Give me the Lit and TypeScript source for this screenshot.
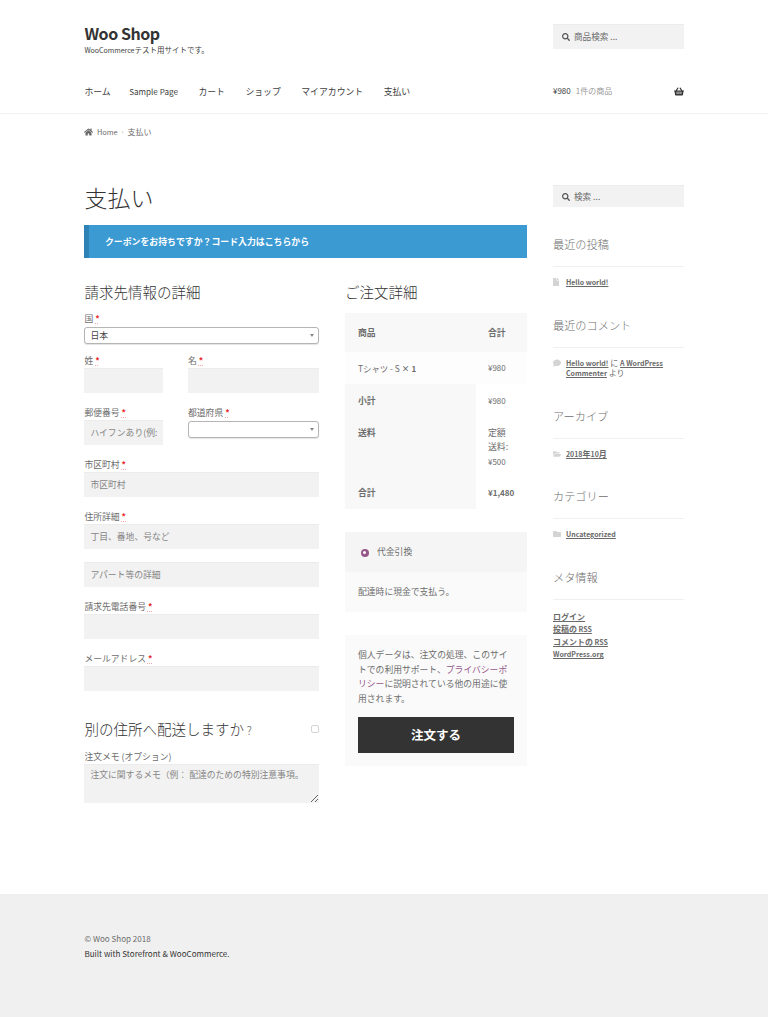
import { LitElement, html, css, svg } from "lit";
import { customElement } from "lit/decorators.js";

const P = {
  search: [512, "M505 442.7L405.3 343c-4.5-4.5-10.6-7-17-7H372c27.6-35.3 44-79.7 44-128C416 93.1 322.9 0 208 0S0 93.1 0 208s93.1 208 208 208c48.3 0 92.7-16.4 128-44v16.3c0 6.4 2.5 12.5 7 17l99.7 99.7c9.4 9.4 24.6 9.4 33.9 0l28.3-28.3c9.4-9.4 9.4-24.6.1-34zM208 336c-70.7 0-128-57.2-128-128 0-70.7 57.2-128 128-128 70.7 0 128 57.2 128 128 0 70.7-57.2 128-128 128z"],
  basket: [576, "M576 216v16c0 13.255-10.745 24-24 24h-8l-26.113 182.788C514.509 462.435 494.257 480 470.37 480H105.63c-23.887 0-44.139-17.565-47.518-41.212L32 256h-8c-13.255 0-24-10.745-24-24v-16c0-13.255 10.745-24 24-24h67.341l106.78-146.821c10.395-14.292 30.407-17.453 44.701-7.058 14.293 10.395 17.453 30.408 7.058 44.701L170.477 192h235.046L326.12 82.821c-10.395-14.292-7.234-34.306 7.059-44.701 14.291-10.395 34.306-7.235 44.701 7.058L484.659 192H552c13.255 0 24 10.745 24 24zM312 392V280c0-13.255-10.745-24-24-24s-24 10.745-24 24v112c0 13.255 10.745 24 24 24s24-10.745 24-24zm112 0V280c0-13.255-10.745-24-24-24s-24 10.745-24 24v112c0 13.255 10.745 24 24 24s24-10.745 24-24zm-224 0V280c0-13.255-10.745-24-24-24s-24 10.745-24 24v112c0 13.255 10.745 24 24 24s24-10.745 24-24z"],
  home: [576, "M280.37 148.26L96 300.11V464a16 16 0 0 0 16 16l112.06-.29a16 16 0 0 0 15.92-16V368a16 16 0 0 1 16-16h64a16 16 0 0 1 16 16v95.64a16 16 0 0 0 16 16.05L464 480a16 16 0 0 0 16-16V300L295.67 148.26a12.19 12.19 0 0 0-15.3 0zM571.6 251.47L488 182.56V44.05a12 12 0 0 0-12-12h-56a12 12 0 0 0-12 12v72.61L318.47 43a48 48 0 0 0-61 0L4.34 251.47a12 12 0 0 0-1.6 16.9l25.5 31A12 12 0 0 0 45.15 301l235.22-193.74a12.19 12.19 0 0 1 15.3 0L530.9 301a12 12 0 0 0 16.9-1.6l25.5-31a12 12 0 0 0-1.7-16.93z"],
  comment: [512, "M256 32C114.6 32 0 125.1 0 240c0 49.6 21.4 95 57 130.7C44.5 421.1 2.7 466 2.2 466.5c-2.2 2.3-2.8 5.7-1.5 8.7S4.8 480 8 480c66.3 0 116-31.8 140.6-51.4 32.7 12.3 69 19.4 107.4 19.4 141.4 0 256-93.1 256-208S397.4 32 256 32z"],
  file: [384, "M224 136V0H24C10.7 0 0 10.7 0 24v464c0 13.3 10.7 24 24 24h336c13.3 0 24-10.7 24-24V160H248c-13.2 0-24-10.8-24-24zm160-14.1v6.1H256V0h6.1c6.4 0 12.5 2.5 17 7l97.9 98c4.5 4.5 7 10.6 7 16.9z"],
  folder: [512, "M464 128H272l-64-64H48C21.49 64 0 85.49 0 112v288c0 26.51 21.49 48 48 48h416c26.51 0 48-21.49 48-48V176c0-26.51-21.49-48-48-48z"],
  open: [576, "M572.694 292.093L500.27 416.248A63.997 63.997 0 0 1 444.989 448H45.025c-18.523 0-30.064-20.093-20.731-36.093l72.424-124.155A64 64 0 0 1 152 256h399.964c18.523 0 30.064 20.093 20.73 36.093zM152 224h328v-48c0-26.51-21.49-48-48-48H272l-64-64H48C21.49 64 0 85.49 0 112v278.046l69.077-118.418C86.214 242.25 117.989 224 152 224z"],
} as const;

const icon = (n: keyof typeof P, cls: string) =>
  html`<svg class=${cls} viewBox="0 0 ${P[n][0]} 512" preserveAspectRatio="xMinYMid meet" aria-hidden="true">${svg`<path fill="currentColor" d=${P[n][1]}></path>`}</svg>`;

const req = html` <abbr class="req">*</abbr>`;

@customElement("app-root")
export class AppRoot extends LitElement {
  static styles = css`
    :host { display: block; min-height: 1017px; background: #fff; color: #6d6d6d;
      font-family: "Noto Sans CJK JP", "Noto Sans", sans-serif; font-size: 8.6px; line-height: 14.5px; }
    * { box-sizing: border-box; }
    h1, h2, h3, p, ul { margin: 0; padding: 0; font-weight: 400; }
    a { color: inherit; text-decoration: none; }
    .wrap { width: 599.6px; margin-left: 84.4px; }

    .top { display: flex; justify-content: space-between; height: 67px; padding-top: 24px; }
    .brand { margin-top: -1px; }
    .brand h1 { font-size: 16px; line-height: 20px; font-weight: 700; color: #333; letter-spacing: -0.45px; }
    .brand p { font-size: 7.5px; line-height: 11px; color: #404040; margin-top: 1px; }
    .brand p span { font-size: 7px; }
    .search { width: 131px; height: 25px; background: #f2f2f2; border-top: 1px solid #ececec; display: flex; align-items: center; padding: 0 0 1px 9px; gap: 4px; font-size: 8.6px; color: #6d6d6d; }
    .search svg { width: 8px; height: 8px; color: #555; }
    .search.side { height: 22px; padding-bottom: 0; }

    .navrow { display: flex; justify-content: space-between; align-items: center; height: 46px; padding-top: 5px; }
    nav { display: flex; gap: 20.5px; font-size: 8.85px; color: #404040; }
    nav .lat { font-size: 8.1px; margin-left: -2px; }
    .cart { width: 131px; display: flex; align-items: center; font-size: 8px; margin-top: -2px; }
    .cart b { font-weight: 400; color: #404040; margin-right: 5px; }
    .cart span { color: #9a9a9a; flex: 1; }
    .cart svg { width: 10px; height: 9px; color: #333; }
    .rule { height: 1px; background: #f0f0f0; }

    .crumb { display: flex; align-items: center; height: 37px; font-size: 7.4px; color: #6d6d6d; padding-bottom: 1px; }
    .crumb svg { width: 9px; height: 8px; margin-right: 3.5px; color: #666; }
    .crumb i { font-style: normal; color: #aaa; margin: 0 4px; font-size: 6px; }
    .crumb span { font-size: 8px; }

    .layout { display: flex; justify-content: space-between; padding-top: 34px; }
    main { width: 442.6px; }
    aside { width: 131px; }
    .title { font-size: 23px; line-height: 24px; color: #333; font-weight: 300; height: 40px; }
    .notice { height: 33px; background: #3c9ad3; border-left: 5px solid #2f82b5; color: #fff; font-weight: 700; font-size: 8.9px; line-height: 34px; padding-left: 15.6px; }

    .cols { display: flex; justify-content: space-between; padding-top: 23px; }
    .bill { width: 234.6px; }
    .order { width: 182px; }
    h3.sec { font-size: 14.5px; line-height: 22px; color: #333; font-weight: 300; }

    .f { display: block; }
    label.l { display: block; font-size: 8.8px; line-height: 13px; color: #6d6d6d; height: 14px; }
    .req { color: #e8252a; font-weight: 700; text-decoration: underline dotted #f3a9a9; text-underline-offset: 1px; }
    input.t, textarea { display: block; width: 100%; height: 25px; background: #f2f2f2; border: 0; border-top: 1px solid #ececec; border-radius: 0; padding: 0 6px 2px; font: inherit; font-size: 8.8px; color: #6d6d6d; outline: 0; margin: 0; }
    input.t::placeholder, textarea::placeholder { color: #858585; opacity: 1; }
    textarea { height: 39px; padding-top: 3px; padding-bottom: 0; line-height: 13px; resize: vertical; }
    .sel { position: relative; height: 17px; background: #fff; border: 1px solid #b5b5b5; border-radius: 3px; box-shadow: 0 1px 1px #e4e4e4; padding-left: 5px; font-size: 8.8px; line-height: 15px; color: #444; }
    .sel::after { content: ""; position: absolute; right: 4px; top: 6px; border: 2.5px solid transparent; border-top: 3.2px solid #888; }
    .two { display: flex; gap: 25px; }
    .two > :first-child { width: 78.6px; flex: none; }
    .two > :last-child { flex: 1; }

    .ship { display: flex; justify-content: space-between; align-items: center; height: 24px; }
    .ship h3 { font-size: 14.5px; line-height: 22px; color: #333; font-weight: 300; }
    .ship h3 span { color: #6d6d6d; font-size: 12px; }
    .ship .cb { width: 8px; height: 8px; border: 1px solid #d4d4d4; border-radius: 2px; background: #fff; }

    table { width: 100%; border-collapse: collapse; font-size: 8px; margin-top: 10px; }
    th, td { padding: 0; text-align: left; vertical-align: top; }
    th { font-weight: 700; color: #6d6d6d; }
    td.c1, th.c1 { width: 131px; padding-left: 13px; }
    td.c2, th.c2 { padding-left: 12px; }
    thead th { background: #f8f8f8; height: 39px; vertical-align: middle; font-size: 8.8px; padding-top: 1px; }
    tbody td { background: #fdfdfd; height: 32px; vertical-align: middle; padding-top: 1px; }
    tbody .j { font-size: 8.4px; }
    tfoot th { background: #f8f8f8; font-size: 8.8px; }
    tfoot td { background: #fff; }
    tfoot tr.r th, tfoot tr.r td { height: 32px; padding-top: 9.5px; }
    tfoot tr.m th, tfoot tr.m td { height: 61px; padding-top: 9.5px; }
    tfoot tr.e th, tfoot tr.e td { padding-top: 8.5px; }
    .ship-rate { line-height: 14.5px; display: block; }
    .ship-rate .j { font-size: 8.9px; }

    .pay { margin-top: 23px; }
    .pay-h { height: 40px; background: #f5f5f5; display: flex; align-items: center; padding: 1px 0 0 16px; gap: 8px; font-size: 8.8px; }
    .radio { width: 8px; height: 8px; border-radius: 50%; background: #96588a; position: relative; }
    .radio::after { content: ""; position: absolute; left: 2.5px; top: 2.5px; width: 3px; height: 3px; border-radius: 50%; background: #fff; }
    .pay-b { height: 40px; background: #fafafa; padding-left: 13px; display: flex; align-items: center; font-size: 8.8px; }
    .place { margin-top: 23px; height: 131px; background: #fafafa; padding: 13px 13px 0; }
    .place p { font-size: 8.8px; line-height: 14.5px; }
    .place a { color: #96588a; }
    .btn { display: block; width: 100%; height: 36px; margin-top: 11px; background: #333; color: #fff; border: 0; font: inherit; font-weight: 700; font-size: 12.5px; padding: 0; }

    .w-h { font-size: 11.2px; line-height: 18px; color: #6d6d6d; font-weight: 300; border-bottom: 1px solid #f0f0f0; padding-bottom: 13px; }
    .w { padding-top: 28px; font-size: 8px; line-height: 10.5px; }
    .w-b { padding-top: 10px; display: flex; gap: 5px; }
    .w-b svg { flex: none; width: 8px; height: 8px; color: #d4d4d4; margin-top: 1px; }
    .w a { color: #6a6a6a; font-weight: 700; font-size: 7px; text-decoration: underline; }
    .w a .j { font-size: 8px; }
    .w .plain a { display: block; line-height: 12.6px; }
    .w .plain { display: block; padding-top: 11px; }

    footer { margin-top: 91px; height: 123px; background: #f0f0f0; padding-top: 38px; font-size: 8.05px; line-height: 14.5px; }
    footer p + p { color: #333; }
  `;

  render() {
    return html`
      <header class="wrap">
        <div class="top">
          <div class="brand"><h1>Woo Shop</h1><p><span>WooCommerce</span>テスト用サイトです。</p></div>
          <div class="search">${icon("search", "")}<span>商品検索 ...</span></div>
        </div>
        <div class="navrow">
          <nav><a>ホーム</a><a class="lat">Sample Page</a><a>カート</a><a>ショップ</a><a>マイアカウント</a><a>支払い</a></nav>
          <div class="cart"><b>¥980</b><span>1件の商品</span>${icon("basket", "")}</div>
        </div>
      </header>
      <div class="rule"></div>
      <div class="wrap">
        <div class="crumb">${icon("home", "")}<a>Home</a><i>›</i><span>支払い</span></div>
        <div class="layout">
          <main>
            <h1 class="title">支払い</h1>
            <div class="notice">クーポンをお持ちですか？コード入力はこちらから</div>
            <div class="cols">
              <section class="bill">
                <h3 class="sec">請求先情報の詳細</h3>
                <div class="f" style="margin-top:8.5px"><label class="l">国${req}</label><div class="sel" style="margin-top:1.5px">日本</div></div>
                <div class="two" style="margin-top:10px">
                  <div><label class="l">姓${req}</label><input class="t" /></div>
                  <div><label class="l">名${req}</label><input class="t" /></div>
                </div>
                <div class="two" style="margin-top:13px">
                  <div><label class="l">郵便番号${req}</label><input class="t" placeholder="ハイフンあり(例: 123-4567)" /></div>
                  <div><label class="l">都道府県${req}</label><div class="sel" style="margin-top:1px"></div></div>
                </div>
                <div class="f" style="margin-top:13px"><label class="l">市区町村${req}</label><input class="t" placeholder="市区町村" /></div>
                <div class="f" style="margin-top:13px"><label class="l">住所詳細${req}</label><input class="t" placeholder="丁目、番地、号など" /></div>
                <input class="t" style="margin-top:13px" placeholder="アパート等の詳細" />
                <div class="f" style="margin-top:13px"><label class="l">請求先電話番号${req}</label><input class="t" /></div>
                <div class="f" style="margin-top:13px"><label class="l">メールアドレス${req}</label><input class="t" /></div>
                <div class="ship" style="margin-top:26px"><h3>別の住所へ配送しますか<span> ?</span></h3><div class="cb"></div></div>
                <div class="f" style="margin-top:9px"><label class="l">注文メモ (オプション)</label><textarea placeholder="注文に関するメモ（例： 配達のための特別注意事項。"></textarea></div>
              </section>
              <section class="order">
                <h3 class="sec">ご注文詳細</h3>
                <table>
                  <thead><tr><th class="c1">商品</th><th class="c2">合計</th></tr></thead>
                  <tbody><tr><td class="c1"><span class="j">Tシャツ - S</span> <b>× 1</b></td><td class="c2">¥980</td></tr></tbody>
                  <tfoot>
                    <tr class="r"><th class="c1">小計</th><td class="c2">¥980</td></tr>
                    <tr class="m"><th class="c1">送料</th><td class="c2"><span class="ship-rate"><span class="j">定額</span><br /><span class="j">送料:</span><br />¥500</span></td></tr>
                    <tr class="r e"><th class="c1">合計</th><td class="c2"><b>¥1,480</b></td></tr>
                  </tfoot>
                </table>
                <div class="pay">
                  <div class="pay-h"><span class="radio"></span><span>代金引換</span></div>
                  <div class="pay-b">配達時に現金で支払う。</div>
                </div>
                <div class="place">
                  <p>個人データは、注文の処理、このサイトでの利用サポート、<a>プライバシーポリシー</a>に説明されている他の用途に使用されます。</p>
                  <button class="btn">注文する</button>
                </div>
              </section>
            </div>
          </main>
          <aside>
            <div class="search side">${icon("search", "")}<span>検索 ...</span></div>
            <div class="w"><h3 class="w-h">最近の投稿</h3><div class="w-b">${icon("file", "")}<a>Hello world!</a></div></div>
            <div class="w"><h3 class="w-h">最近のコメント</h3><div class="w-b">${icon("comment", "")}<div><a>Hello world!</a> に <a>A WordPress Commenter</a> より</div></div></div>
            <div class="w"><h3 class="w-h">アーカイブ</h3><div class="w-b">${icon("open", "")}<a>2018<span class="j">年</span>10<span class="j">月</span></a></div></div>
            <div class="w"><h3 class="w-h">カテゴリー</h3><div class="w-b">${icon("folder", "")}<a>Uncategorized</a></div></div>
            <div class="w"><h3 class="w-h">メタ情報</h3><div class="plain"><a><span class="j">ログイン</span></a><a><span class="j">投稿の</span> RSS</a><a><span class="j">コメントの</span> RSS</a><a>WordPress.org</a></div></div>
          </aside>
        </div>
      </div>
      <footer><div class="wrap"><p>© Woo Shop 2018</p><p>Built with Storefront &amp; WooCommerce.</p></div></footer>
    `;
  }
}
